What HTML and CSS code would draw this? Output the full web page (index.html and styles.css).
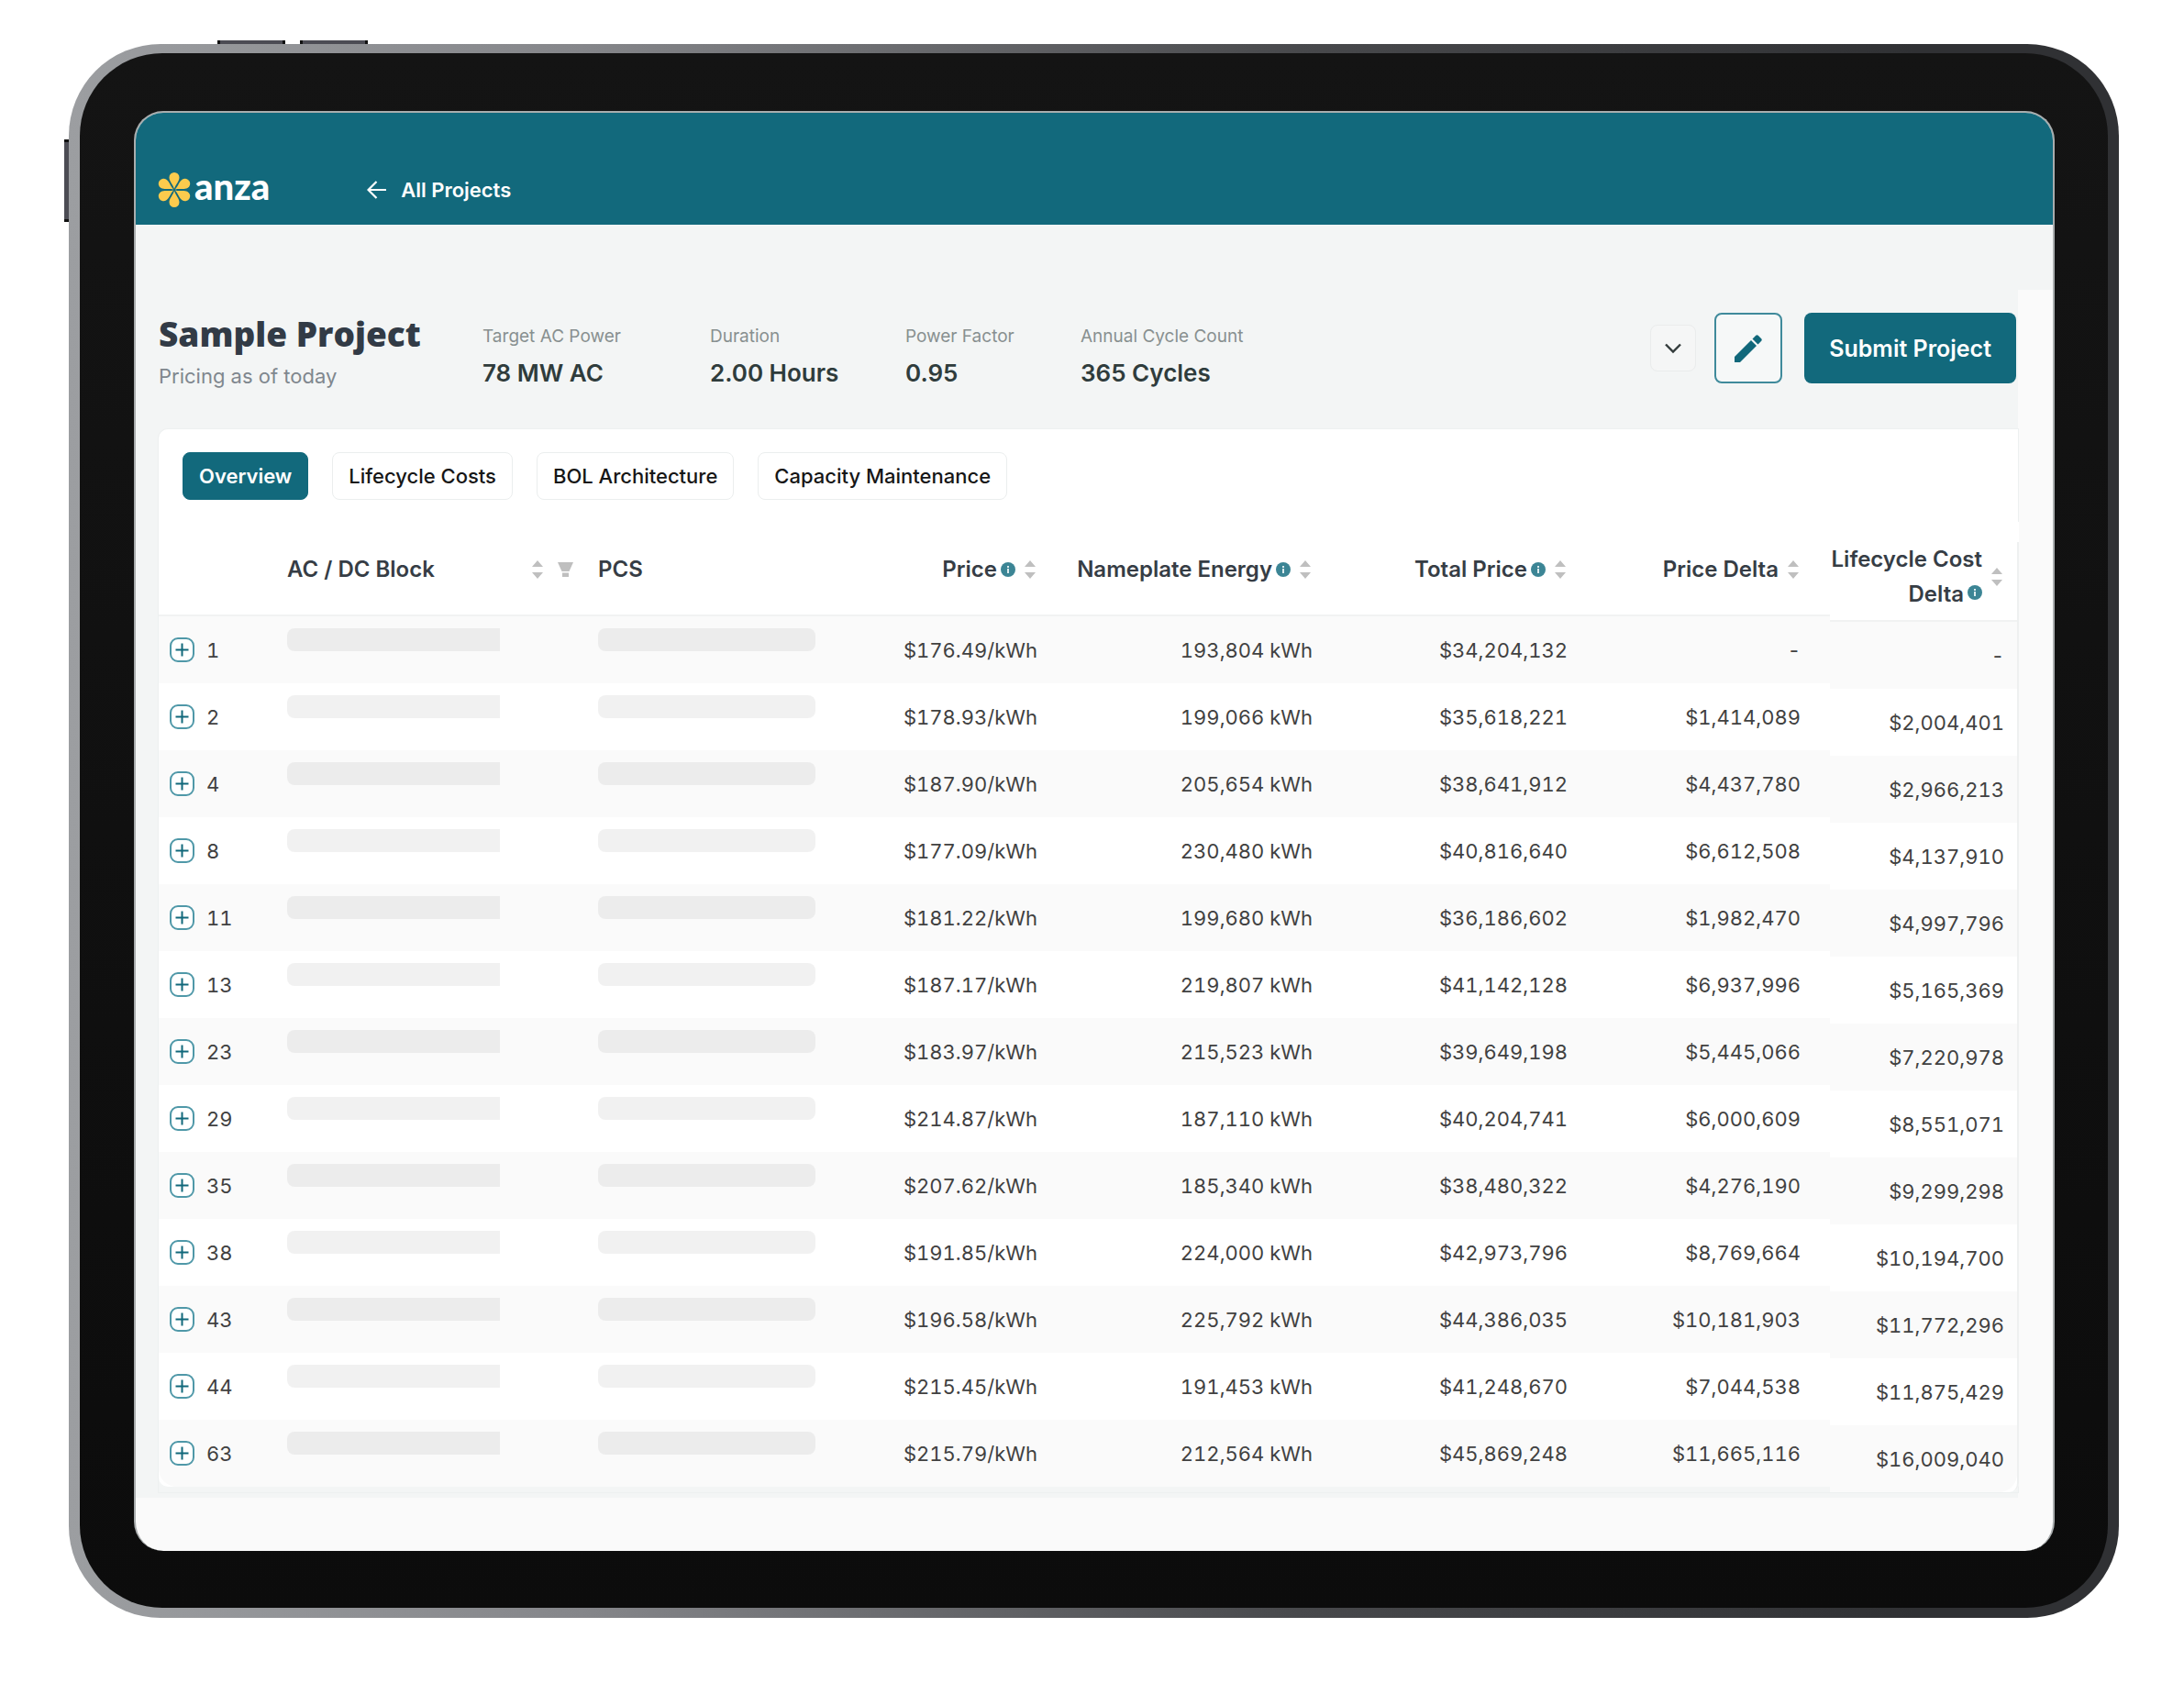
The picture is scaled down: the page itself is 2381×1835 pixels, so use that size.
FILE: index.html
```html
<!DOCTYPE html>
<html lang="en">
<head>
<meta charset="utf-8">
<title>Sample Project</title>
<link rel="stylesheet" href="styles.css">
</head>
<body>
<svg class="sprite" aria-hidden="true">
  <symbol id="sort" viewBox="0 0 12 20"><path d="M6 0l6 7H0zM6 20l6-7H0z" fill="#bfbfbf"/></symbol>
  <symbol id="info" viewBox="0 0 16 16"><circle cx="8" cy="8" r="8" fill="#3c8595"/><path d="M7 4h2v2H7zM7 7h2v5H7z" fill="#dcebee"/></symbol>
  <symbol id="plus" viewBox="0 0 27 27"><rect x="1" y="1" width="25" height="25" rx="8" fill="#fff" stroke="#4f98a8" stroke-width="2"/><path d="M13.500 6.500v14M6.500 13.500h14" stroke="#11687b" stroke-width="2"/></symbol>
</svg>
<div class="device">
  <i class="key key-up"></i><i class="key key-down"></i><i class="key key-power"></i>
  <div class="bezel">
    <div class="screen">
      <header class="topbar">
        <a class="brand" href="#">
          <svg width="36" height="38" viewBox="0 0 36 38" aria-hidden="true">
            <defs><path id="petal" d="M18 18C16.500 13 12.500 9.500 12.500 5.500a5.500 5.500 0 0 1 11 0C23.500 9.500 19.500 13 18 18z"/></defs>
            <g fill="#fccb4d"><use href="#petal"/><use href="#petal" transform="rotate(60 18 19)"/><use href="#petal" transform="rotate(120 18 19)"/><use href="#petal" transform="rotate(180 18 19)"/><use href="#petal" transform="rotate(240 18 19)"/><use href="#petal" transform="rotate(300 18 19)"/></g>
          </svg>
          <span>anza</span>
        </a>
        <a class="back" href="#">
          <svg width="22" height="20" viewBox="0 0 22 20" aria-hidden="true"><path d="M21 10H2M10.500 1L1.500 10l9 9" fill="none" stroke="#fff" stroke-width="2.200"/></svg>
          All Projects
        </a>
      </header>
      <div class="band"></div>
      <main class="page">
        <div class="summary">
          <div class="heading">
            <h1>Sample Project</h1>
            <p>Pricing as of today</p>
          </div>
          <dl class="facts">
            <div><dt>Target AC Power</dt><dd>78 MW AC</dd></div>
            <div><dt>Duration</dt><dd>2.00 Hours</dd></div>
            <div><dt>Power Factor</dt><dd>0.95</dd></div>
            <div><dt>Annual Cycle Count</dt><dd>365 Cycles</dd></div>
          </dl>
          <div class="actions">
            <button class="more" type="button" aria-label="More"><svg width="18" height="12" viewBox="0 0 18 12"><path d="M1 1.500l8 8 8-8" fill="none" stroke="#333b3b" stroke-width="2.400"/></svg></button>
            <button class="edit" type="button" aria-label="Edit"><svg width="30" height="30" viewBox="0 0 30 30"><path d="M0 24L18 6l6 6L6 30H0zM19.500 4.500L23 1q1.500-1.500 3 0l3 3q1.500 1.500 0 3l-3.500 3.500z" fill="#11687b"/></svg></button>
            <button class="submit" type="button">Submit Project</button>
          </div>
        </div>
        <section class="card">
          <nav class="tabs">
            <button class="tab active" type="button">Overview</button>
            <button class="tab" type="button">Lifecycle Costs</button>
            <button class="tab" type="button">BOL Architecture</button>
            <button class="tab" type="button">Capacity Maintenance</button>
          </nav>
          <div class="tables">
            <div class="pane">
              <table class="grid">
                <colgroup><col class="c-num"><col class="c-block"><col class="c-pcs"><col class="c-price"><col class="c-energy"><col class="c-total"><col class="c-delta"></colgroup>
                <thead><tr>
                  <th></th>
                  <th><span class="block-head">AC / DC Block <span class="tools"><svg class="sort"><use href="#sort"/></svg><svg width="17" height="16" viewBox="0 0 17 16"><path d="M0 0h17l-4.500 10h-8zM5 11.500h7V16H5z" fill="#bfbfbf"/></svg></span></span></th>
                  <th>PCS</th>
                  <th><span class="head">Price<svg class="info"><use href="#info"/></svg><svg class="sort"><use href="#sort"/></svg></span></th>
                  <th><span class="head">Nameplate Energy<svg class="info"><use href="#info"/></svg><svg class="sort"><use href="#sort"/></svg></span></th>
                  <th><span class="head">Total Price<svg class="info"><use href="#info"/></svg><svg class="sort"><use href="#sort"/></svg></span></th>
                  <th><span class="head">Price Delta<svg class="sort"><use href="#sort"/></svg></span></th>
                </tr></thead>
                <tbody>
                  <tr><td><span class="num"><button type="button" aria-label="Expand"><svg><use href="#plus"/></svg></button>1</span></td><td><div class="bar cut"></div></td><td><div class="bar"></div></td><td>$176.49/kWh</td><td>193,804 kWh</td><td>$34,204,132</td><td>-</td></tr>
                  <tr><td><span class="num"><button type="button" aria-label="Expand"><svg><use href="#plus"/></svg></button>2</span></td><td><div class="bar cut"></div></td><td><div class="bar"></div></td><td>$178.93/kWh</td><td>199,066 kWh</td><td>$35,618,221</td><td>$1,414,089</td></tr>
                  <tr><td><span class="num"><button type="button" aria-label="Expand"><svg><use href="#plus"/></svg></button>4</span></td><td><div class="bar cut"></div></td><td><div class="bar"></div></td><td>$187.90/kWh</td><td>205,654 kWh</td><td>$38,641,912</td><td>$4,437,780</td></tr>
                  <tr><td><span class="num"><button type="button" aria-label="Expand"><svg><use href="#plus"/></svg></button>8</span></td><td><div class="bar cut"></div></td><td><div class="bar"></div></td><td>$177.09/kWh</td><td>230,480 kWh</td><td>$40,816,640</td><td>$6,612,508</td></tr>
                  <tr><td><span class="num"><button type="button" aria-label="Expand"><svg><use href="#plus"/></svg></button>11</span></td><td><div class="bar cut"></div></td><td><div class="bar"></div></td><td>$181.22/kWh</td><td>199,680 kWh</td><td>$36,186,602</td><td>$1,982,470</td></tr>
                  <tr><td><span class="num"><button type="button" aria-label="Expand"><svg><use href="#plus"/></svg></button>13</span></td><td><div class="bar cut"></div></td><td><div class="bar"></div></td><td>$187.17/kWh</td><td>219,807 kWh</td><td>$41,142,128</td><td>$6,937,996</td></tr>
                  <tr><td><span class="num"><button type="button" aria-label="Expand"><svg><use href="#plus"/></svg></button>23</span></td><td><div class="bar cut"></div></td><td><div class="bar"></div></td><td>$183.97/kWh</td><td>215,523 kWh</td><td>$39,649,198</td><td>$5,445,066</td></tr>
                  <tr><td><span class="num"><button type="button" aria-label="Expand"><svg><use href="#plus"/></svg></button>29</span></td><td><div class="bar cut"></div></td><td><div class="bar"></div></td><td>$214.87/kWh</td><td>187,110 kWh</td><td>$40,204,741</td><td>$6,000,609</td></tr>
                  <tr><td><span class="num"><button type="button" aria-label="Expand"><svg><use href="#plus"/></svg></button>35</span></td><td><div class="bar cut"></div></td><td><div class="bar"></div></td><td>$207.62/kWh</td><td>185,340 kWh</td><td>$38,480,322</td><td>$4,276,190</td></tr>
                  <tr><td><span class="num"><button type="button" aria-label="Expand"><svg><use href="#plus"/></svg></button>38</span></td><td><div class="bar cut"></div></td><td><div class="bar"></div></td><td>$191.85/kWh</td><td>224,000 kWh</td><td>$42,973,796</td><td>$8,769,664</td></tr>
                  <tr><td><span class="num"><button type="button" aria-label="Expand"><svg><use href="#plus"/></svg></button>43</span></td><td><div class="bar cut"></div></td><td><div class="bar"></div></td><td>$196.58/kWh</td><td>225,792 kWh</td><td>$44,386,035</td><td>$10,181,903</td></tr>
                  <tr><td><span class="num"><button type="button" aria-label="Expand"><svg><use href="#plus"/></svg></button>44</span></td><td><div class="bar cut"></div></td><td><div class="bar"></div></td><td>$215.45/kWh</td><td>191,453 kWh</td><td>$41,248,670</td><td>$7,044,538</td></tr>
                  <tr><td><span class="num"><button type="button" aria-label="Expand"><svg><use href="#plus"/></svg></button>63</span></td><td><div class="bar cut"></div></td><td><div class="bar"></div></td><td>$215.79/kWh</td><td>212,564 kWh</td><td>$45,869,248</td><td>$11,665,116</td></tr>
                </tbody>
              </table>
            </div>
            <div class="pane pinned">
              <table class="grid">
                <thead><tr><th><span class="head"><span>Lifecycle Cost<br>Delta<svg class="info"><use href="#info"/></svg></span><svg class="sort"><use href="#sort"/></svg></span></th></tr></thead>
                <tbody>
                  <tr><td>-</td></tr>
                  <tr><td>$2,004,401</td></tr>
                  <tr><td>$2,966,213</td></tr>
                  <tr><td>$4,137,910</td></tr>
                  <tr><td>$4,997,796</td></tr>
                  <tr><td>$5,165,369</td></tr>
                  <tr><td>$7,220,978</td></tr>
                  <tr><td>$8,551,071</td></tr>
                  <tr><td>$9,299,298</td></tr>
                  <tr><td>$10,194,700</td></tr>
                  <tr><td>$11,772,296</td></tr>
                  <tr><td>$11,875,429</td></tr>
                  <tr><td>$16,009,040</td></tr>
                </tbody>
              </table>
            </div>
          </div>
        </section>
      </main>
    </div>
  </div>
</div>
</body>
</html>
```

FILE: styles.css
```css
* { box-sizing: border-box; }

body {
  margin: 0;
  padding: 48px 71px 71px 75px;
  background: #fff;
  color: #333;
  font-family: Inter, "Liberation Sans", sans-serif;
  font-size: 22px;
  line-height: 28px;
}

button { font: inherit; cursor: pointer; }
a { color: inherit; text-decoration: none; }
svg { display: block; flex: none; }
.sprite { position: absolute; width: 0; height: 0; }

/* Tablet frame */
.device {
  position: relative;
  padding: 10px 12px 11px;
  border-radius: 100px;
  background: linear-gradient(90deg, #9c9ea1, #85868a 25%, #48494c 60%, #303134 90%);
}
.key { position: absolute; background: #4c4c54; border: 0 solid #111; }
.key-up, .key-down { top: -4px; width: 74px; height: 4px; border-width: 0 3px; }
.key-up { left: 162px; }
.key-down { left: 252px; }
.key-power { top: 104px; left: -5px; width: 5px; height: 90px; border-width: 3px 0; }
.bezel {
  padding: 63px 58px 62px 59px;
  border-radius: 90px;
  background: linear-gradient(#141414, #0c0c0c);
}
.screen {
  border: 2px solid #a9adae;
  border-bottom-width: 0;
  border-radius: 32px;
  padding-bottom: 58px;
  background: #fafafa;
  overflow: hidden;
}

/* Top bar */
.topbar {
  display: flex;
  align-items: center;
  gap: 106px;
  height: 122px;
  padding: 46px 24px 0;
  background: #12697c;
  color: #fff;
}
.brand { display: flex; align-items: center; gap: 4px; }
.brand span { padding-bottom: 8px; font: 900 40px/38px Lato, sans-serif; }
.back { display: flex; align-items: center; gap: 15px; font-weight: 600; }

.band { height: 71px; background: #f3f5f5; }
.page { margin-right: 38px; padding: 25px 0 6px 25px; background: #f3f5f5; }

/* Project summary */
.summary { display: flex; align-items: flex-start; margin-bottom: 41px; }
.heading { width: 353px; }
h1 {
  margin: 0;
  color: #323b46;
  font: 800 37px/46px "Open Sans", sans-serif;
}
.heading p { margin: 9px 0 0; color: #7f878e; }
.facts { display: grid; grid-template-columns: 248px 213px 191px auto; margin: 0; padding-top: 6px; }
dt { color: #889090; font-size: 19px; line-height: 40px; }
dd { margin: 0; color: #2f3c3c; font-size: 26px; line-height: 40px; font-weight: 600; }
.actions { display: flex; align-items: center; margin-left: auto; padding-right: 2px; }
.actions button { display: flex; align-items: center; justify-content: center; border-radius: 8px; }
.more { width: 50px; height: 51px; margin-right: 20px; border: 1px solid #eaecec; background: #f5f6f6; }
.edit { width: 74px; height: 77px; margin-right: 24px; border: 2px solid #3f8a9b; background: #f6f8f8; }
.submit { height: 77px; padding: 0 27px; border: 0; background: #12697c; color: #fff; font-size: 25px; font-weight: 600; }

/* Card */
.card { border-radius: 10px 0 0 0; box-shadow: 0 0 0 1px #edf0f0; }
.tabs { display: flex; gap: 26px; padding: 25px 26px 24px; border-radius: 10px 0 0 0; background: #fff; }
.tab {
  height: 52px;
  padding: 0 17px;
  border: 1px solid #ebeeee;
  border-radius: 8px;
  background: #fff;
  color: #161616;
  font-weight: 500;
}
.tab.active { border-color: #12697c; background: #12697c; color: #fff; font-weight: 600; }

.tables { display: flex; align-items: flex-start; }
.pane { flex: 1; background: #fff; border-radius: 0 0 0 10px; }
.pinned { flex: 0 0 206px; padding-top: 22px; border-radius: 0 0 10px 0; }

.grid { width: 100%; border-collapse: separate; border-spacing: 0; table-layout: fixed; }
.c-num { width: 140px; }
.c-block { width: 339px; }
.c-pcs { width: 240px; }
.c-price { width: 271px; }
.c-energy { width: 300px; }
.c-total { width: 278px; }
.c-delta { width: 254px; }

th {
  height: 103px;
  padding: 2px 0 0;
  border-bottom: 2px solid #f1f2f2;
  color: #363d45;
  font-size: 24px;
  font-weight: 600;
  text-align: left;
}
td {
  height: 73px;
  padding: 0 32px 0 0;
  color: #414141;
  font-variant-numeric: tabular-nums;
  text-align: right;
}
tbody tr:nth-child(odd) td { background: #fafafa; }
.head { display: flex; align-items: center; justify-content: flex-end; padding-right: 34px; text-align: right; }
.head .info { margin-left: 4px; }
.head .sort { margin-left: 10px; }
.sort { width: 12px; height: 20px; }
.info { width: 16px; height: 16px; }
.block-head { display: flex; justify-content: space-between; align-items: center; padding-right: 27px; }
.tools { display: flex; align-items: center; gap: 16px; }

.num { display: flex; align-items: center; gap: 13px; padding-left: 12px; }
.num button { padding: 0; border: 0; background: none; }
.num svg { width: 27px; height: 27px; }
.bar { height: 25px; margin-bottom: 23px; border-radius: 8px; background: rgba(0, 0, 0, 0.055); }
td:nth-child(3) { padding-right: 3px; }
.bar.cut { margin-right: 75px; border-radius: 8px 0 0 8px; }
tbody tr:last-child td:first-child { border-bottom-left-radius: 20px; }

.pinned .grid { border-right: 2px solid #eef0f0; border-bottom-right-radius: 10px; }
.pinned th { height: 87px; padding: 0 0 9px; line-height: 38px; vertical-align: top; }
.pinned .head { padding-right: 16px; }
.pinned .info { display: inline-block; vertical-align: 2px; }
.pinned td { padding-right: 14px; }
.pinned tbody tr:last-child td:first-child { border-radius: 0 0 20px 0; }
```
